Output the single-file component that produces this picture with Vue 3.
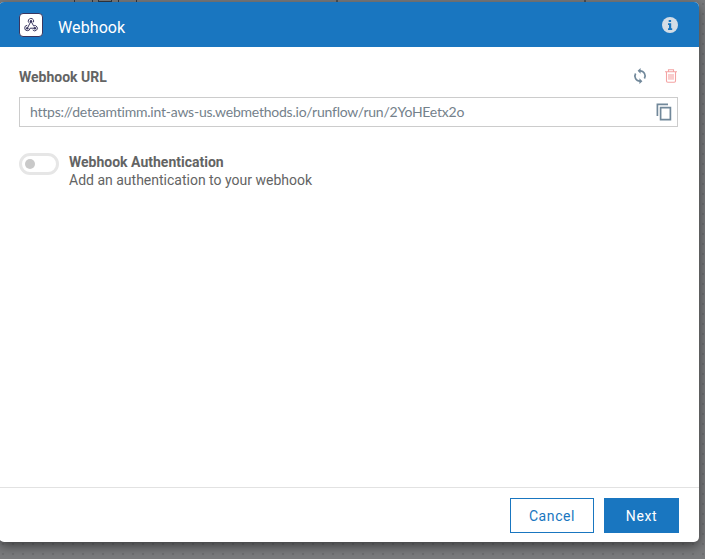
<script setup>
import { ref } from 'vue'

const url = ref('https://deteamtimm.int-aws-us.webmethods.io/runflow/run/2YoHEetx2o')
const authEnabled = ref(false)
</script>

<template>
  <div class="backdrop">
    <svg class="canvas-lines" width="705" height="2" viewBox="0 0 705 2" shape-rendering="crispEdges">
      <path d="M74 0h1v2h-1zM92 0h1v2h-1zM98 0h1v2h-1zM98 1h14v1h-14zM111 0h1v2h-1zM118 0h1v2h-1zM136 0h1v2h-1z" fill="#33363f" />
      <path d="M336 0h2v2h-2zM584 0h2v2h-2z" fill="#4e5154" />
    </svg>
    <section class="dialog">
      <header class="head">
        <span class="logo">
          <svg width="16" height="16" viewBox="0 0 16 16" fill="none" stroke="#39365f" stroke-width="1">
            <path d="M5.7 5.6A2.7 2.7 0 1 1 10.4 5.3M8 4.2l-3.2 6.2M4.2 8.3a2.7 2.7 0 1 0 2.9 2.9h4.6M8 4.2l2.6 4.7a2.6 2.6 0 1 1-.9 3.9" />
            <g fill="#39365f" stroke="none"><circle cx="8" cy="4.2" r="1.2" /><circle cx="4.3" cy="11.2" r="1.2" /><circle cx="11.9" cy="11.2" r="1.2" /></g>
          </svg>
        </span>
        <h1 class="title">Webhook</h1>
        <svg class="info" width="16" height="16" viewBox="0 0 16 16">
          <circle cx="8" cy="8" r="8" fill="#d3dde6" />
          <path d="M6.7 3h2.4v2.1H6.7zM6 6.3h3.2v5h1V13H6v-1.7h1V8H6z" fill="#1976c0" />
        </svg>
      </header>
      <main class="body">
        <div class="label-row">
          <label class="label">Webhook URL</label>
          <svg class="refresh" width="14" height="16" viewBox="0 0 14 16" fill="none" stroke="#71889a" stroke-width="1.7">
            <path d="M7 2.8A5.1 5.1 0 0 1 11.4 10.5M7 13.2A5.1 5.1 0 0 1 2.6 5.5" />
            <path d="M7.6 0v5.7L4.6 2.8zM6.4 10.3V16l3-2.8z" fill="#71889a" stroke="none" />
          </svg>
          <svg class="trash" width="12" height="14" viewBox="0 0 12 14" fill="none" stroke="#f4a3a3" stroke-width="1.1">
            <path d="M0 2.8h12M3.5 3V.8h5V3M1.5 3v9q0 1.2 1.3 1.2h6.4q1.3 0 1.3-1.2V3M4 5v5.8M6 5v5.8M8 5v5.8" />
          </svg>
        </div>
        <div class="field">
          <span class="url">{{ url }}</span>
          <svg width="16" height="18" viewBox="0 0 16 18" fill="none" stroke="#71889a" stroke-width="1.7">
            <path d="M1.4 13V1.3H12" /><path d="M4.6 4.6h9.8v12H4.6z" />
          </svg>
        </div>
        <div class="auth">
          <button class="toggle" :class="{ on: authEnabled }" @click="authEnabled = !authEnabled"><span class="knob"></span></button>
          <div>
            <div class="auth-title">Webhook Authentication</div>
            <div class="auth-text">Add an authentication to your webhook</div>
          </div>
        </div>
      </main>
      <footer class="foot">
        <button class="btn cancel">Cancel</button>
        <button class="btn next">Next</button>
      </footer>
    </section>
  </div>
</template>

<style>
body { margin: 0; overflow: hidden; }
</style>

<style scoped>
.backdrop {
  box-sizing: border-box;
  position: relative;
  width: 705px;
  height: 559px;
  padding-top: 2px;
  overflow: hidden;
  background-color: #7a7b7d;
  background-image: radial-gradient(circle, #6e6f71 0, #6e6f71 1px, transparent 1.4px);
  background-size: 10px 10px;
  background-position: -2px -1px;
  font-family: Roboto, "Liberation Sans", sans-serif;
  color: #636464;
}
.canvas-lines { position: absolute; left: 0; top: 0; }
.dialog {
  position: relative;
  display: flex;
  flex-direction: column;
  width: 700px;
  height: 540px;
  margin-left: -1px;
  border-radius: 5px;
  overflow: hidden;
  background: #fff;
  box-shadow: 0 4px 12px rgba(0, 0, 0, .5);
}
.head {
  box-sizing: border-box;
  display: flex;
  align-items: center;
  height: 45px;
  padding: 0 21px 0 20px;
  background: #1976c0;
}
.logo {
  box-sizing: border-box;
  display: flex;
  align-items: center;
  justify-content: center;
  width: 24px;
  height: 24px;
  border: 1px solid #39365f;
  border-radius: 4px;
  background: #fff;
}
.title {
  margin: 7px 0 0 15px;
  font-size: 16px;
  font-weight: 400;
  line-height: 20px;
  letter-spacing: .1px;
  color: #fff;
}
.info { margin-left: auto; }
.body { flex: 1; padding: 20px 21px 0 20px; }
.label-row { display: flex; align-items: center; height: 18px; }
.label { flex: 1; padding-top: 2px; font-size: 14px; font-weight: 700; line-height: 18px; }
.refresh { margin: -1px 18px 0 0; }
.trash { margin: -1px 1px 0 0; }
.field {
  box-sizing: border-box;
  display: flex;
  align-items: center;
  justify-content: space-between;
  height: 30px;
  margin-top: 12px;
  padding: 0 5px 0 10px;
  border: 1px solid #ccc;
}
.url {
  font-family: Lato, "Open Sans", sans-serif;
  font-size: 14px;
  line-height: 20px;
  letter-spacing: -.23px;
  font-variant-ligatures: none;
  color: #74818b;
  white-space: nowrap;
}
.auth { display: flex; gap: 10px; margin-top: 26px; }
.toggle {
  box-sizing: border-box;
  display: flex;
  align-items: center;
  width: 40px;
  height: 22px;
  padding: 0 3px;
  border: 3px solid #e6e6e6;
  border-radius: 11px;
  background: #fff;
}
.toggle.on { justify-content: flex-end; }
.knob { width: 10px; height: 10px; border-radius: 50%; background: #c9c9c9; }
.auth-title, .auth-text { font-size: 14px; line-height: 18px; white-space: nowrap; }
.auth-title { font-weight: 700; }
.foot {
  box-sizing: border-box;
  display: flex;
  justify-content: flex-end;
  gap: 10px;
  height: 55px;
  padding: 10px 20px 0;
  border-top: 1px solid #e2e2e2;
}
.btn {
  box-sizing: border-box;
  height: 35px;
  padding: 1px 0 0;
  border: 1px solid #1976c0;
  font-family: inherit;
  font-size: 14px;
  letter-spacing: .6px;
}
.cancel { width: 84px; background: #fff; color: #1976c0; }
.next { width: 75px; background: #1976c0; color: #fff; }
</style>
